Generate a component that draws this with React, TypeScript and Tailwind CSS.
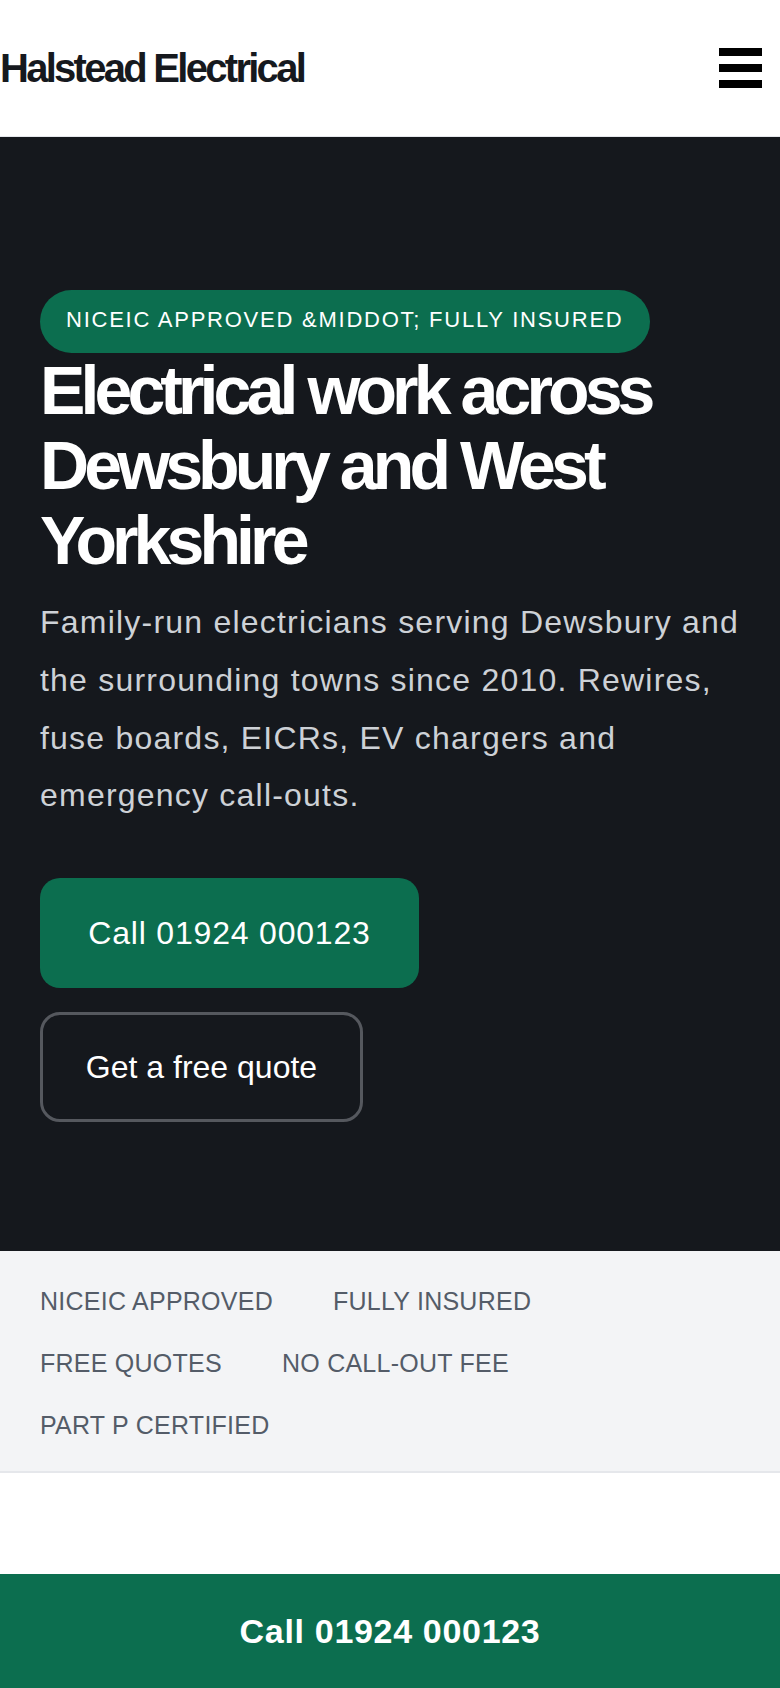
import React from "react";

const trustItems = [
  "NICEIC approved",
  "Fully insured",
  "Free quotes",
  "No call-out fee",
  "Part P certified",
];

export default function App() {
  return (
    <div className="min-h-screen bg-white pb-[114px] font-['Liberation_Sans',Arial,sans-serif]">
      {/* Header */}
      <header className="flex h-[137px] items-center justify-between border-b border-[#e5e7eb] bg-white pr-[18px]">
        <a href="#" className="text-[40px] font-bold leading-none tracking-[-0.068em] text-[#16191e]">
          Halstead Electrical
        </a>
        <button aria-label="Menu" className="flex w-[43px] flex-col gap-[8px]">
          <span className="h-[8px] w-full bg-black" />
          <span className="h-[8px] w-full bg-black" />
          <span className="h-[8px] w-full bg-black" />
        </button>
      </header>

      {/* Hero */}
      <section className="bg-[#15181d] px-[40px] pb-[129px] pt-[153px]">
        <span className="inline-block rounded-full bg-[#0c6e4f] px-[26px] pb-[17px] pt-[13px] text-[22px] uppercase leading-[33px] tracking-[0.08em] text-white">
          NICEIC approved &amp;middot; fully insured
        </span>
        <h1 className="text-[68px] font-bold leading-[1.1] tracking-[-0.072em] text-white">
          Electrical work across Dewsbury and West Yorkshire
        </h1>
        <p className="mt-[17px] text-[32px] leading-[1.8] tracking-[0.038em] text-[#cdd1d6]">
          Family-run electricians serving Dewsbury and the surrounding towns since 2010. Rewires,
          fuse boards, EICRs, EV chargers and emergency call-outs.
        </p>
        <div className="mt-[53px] flex flex-col items-start gap-[24px]">
          <a
            href="tel:01924000123"
            className="inline-flex w-[379px] items-center justify-center rounded-[20px] bg-[#0c6e4f] py-[28px] text-[32px] leading-[54px] tracking-[0.025em] text-white"
          >
            Call 01924 000123
          </a>
          <a
            href="#quote"
            className="inline-flex w-[323px] items-center justify-center rounded-[20px] border-[3px] border-[#55585e] py-[25px] text-[32px] leading-[54px] text-white"
          >
            Get a free quote
          </a>
        </div>
      </section>

      {/* Trust strip */}
      <section className="border-b-2 border-[#e5e7eb] bg-[#f3f4f6] px-[40px] pb-[26px] pt-[30px]">
        <ul className="flex flex-wrap gap-x-[60px] gap-y-[22px]">
          {trustItems.map((item) => (
            <li
              key={item}
              className="text-[25px] uppercase leading-[40px] tracking-[0.01em] text-[#545c68]"
            >
              {item}
            </li>
          ))}
        </ul>
      </section>

      {/* Sticky call bar */}
      <a
        href="tel:01924000123"
        className="fixed inset-x-0 bottom-0 flex h-[114px] items-center justify-center bg-[#0c6e4f] text-[34px] font-bold tracking-[0.02em] text-white"
      >
        Call 01924 000123
      </a>
    </div>
  );
}
